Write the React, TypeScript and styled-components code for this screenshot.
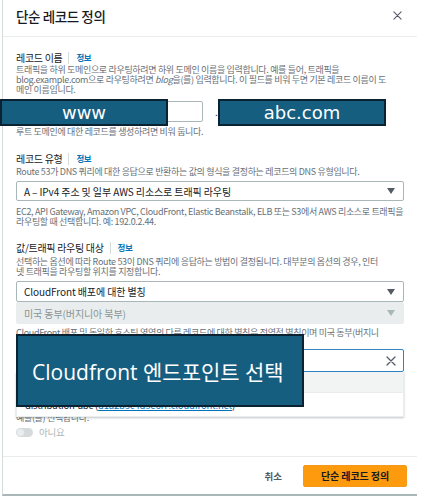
import React from 'react';
import styled, { createGlobalStyle } from 'styled-components';

const GlobalStyle = createGlobalStyle`
  html, body { margin: 0; padding: 0; background: #ffffff; }
  body { font-family: "Noto Sans CJK KR", "Noto Sans", sans-serif; color: #16191f; }
  * { box-sizing: border-box; }
`;

const Page = styled.div`
  position: relative;
  width: 424px;
  height: 496px;
  overflow: hidden;
`;

const Modal = styled.div`
  margin-left: 2px;
  width: 415px;
  height: 496px;
  border-left: 1px solid #d5dbdb;
  border-bottom: 2px solid #aab7b8;
  display: flex;
  flex-direction: column;
  background: #ffffff;
`;

const Header = styled.div`
  height: 37px;
  flex: none;
  border-bottom: 1px solid #eaeded;
  display: flex;
  align-items: center;
  justify-content: space-between;
  padding: 0 15px 5px 13px;
`;

const Title = styled.h1`
  margin: 0;
  font-size: 13.5px;
  font-weight: 500;
  letter-spacing: -0.4px;
  line-height: 16px;
  color: #16191f;
`;

const CloseButton = styled.button`
  border: none;
  background: none;
  padding: 0;
  width: 10px;
  height: 10px;
  display: flex;
  align-items: center;
  justify-content: center;
  color: #545b64;
`;

const Body = styled.div`
  flex: 1;
  position: relative;
  padding: 14px 10px 0 13px;
  display: flex;
  flex-direction: column;
`;

const Field = styled.div<{ $gap?: number }>`
  display: flex;
  flex-direction: column;
  margin-top: ${p => p.$gap ?? 0}px;
`;

const LabelRow = styled.div`
  display: flex;
  align-items: center;
  height: 13px;
`;

const Label = styled.span`
  font-size: 10px;
  letter-spacing: -0.3px;
  line-height: 13px;
  color: #16191f;
`;

const Sep = styled.span`
  width: 1px;
  height: 12px;
  background: #d5dbdb;
  margin: 0 7px 0 6px;
`;

const Info = styled.span`
  font-size: 8.5px;
  font-weight: 700;
  letter-spacing: -0.4px;
  color: #0073bb;
  line-height: 13px;
`;

const Desc = styled.div<{ $mt?: number }>`
  margin-top: ${p => p.$mt ?? 1}px;
  font-size: 9px;
  line-height: 10px;
  letter-spacing: -0.33px;
  color: #687078;
  white-space: nowrap;
  em { font-style: italic; }
`;

const NameRow = styled.div`
  margin-top: 6px;
  display: flex;
  align-items: center;
  height: 21px;
`;

const TextInput = styled.div<{ $w: number }>`
  width: ${p => p.$w}px;
  height: 21px;
  border: 1px solid #aab7b8;
  border-radius: 2px;
  background: #fff;
`;

const DomainText = styled.span`
  margin-left: 12px;
  font-size: 10px;
  color: #16191f;
`;

const Select = styled.div<{ $disabled?: boolean; $h: number; $mt?: number }>`
  margin-top: ${p => p.$mt ?? 0}px;
  height: ${p => p.$h}px;
  width: 388px;
  border: 1px solid ${p => (p.$disabled ? '#eaeded' : '#aab7b8')};
  background: ${p => (p.$disabled ? '#eaeded' : '#ffffff')};
  border-radius: 2px;
  display: flex;
  align-items: center;
  justify-content: space-between;
  padding: 0 8px 0 7px;
  font-size: 10px;
  letter-spacing: -0.1px;
  color: ${p => (p.$disabled ? '#879596' : '#16191f')};
`;

const Caret = styled.span<{ $disabled?: boolean }>`
  width: 0;
  height: 0;
  border-left: 4px solid transparent;
  border-right: 4px solid transparent;
  border-top: 6px solid ${p => (p.$disabled ? '#aab7b8' : '#545b64')};
`;

const SearchWrap = styled.div`
  position: relative;
  margin-top: 1px;
`;

const SearchInput = styled.div`
  height: 23px;
  width: 388px;
  border: 1px solid #3184c6;
  border-radius: 2px;
  display: flex;
  align-items: center;
  justify-content: flex-end;
  padding-right: 7px;
  color: #545b64;
`;

const Menu = styled.div`
  position: absolute;
  top: 23px;
  left: 0;
  width: 388px;
  background: #fff;
  border: 1px solid #eaeded;
  border-top: none;
  box-shadow: 0 1px 2px rgba(0, 28, 36, 0.25);
  z-index: 2;
`;

const MenuGroup = styled.div`
  height: 21px;
  background: #f2f3f3;
  border-bottom: 1px solid #eaeded;
  font-size: 9px;
  color: #545b64;
  padding-left: 8px;
  display: flex;
  align-items: center;
`;

const MenuItem = styled.div`
  height: 23px;
  padding-left: 8px;
  display: flex;
  align-items: center;
  font-size: 9.5px;
  color: #16191f;
  letter-spacing: -0.2px;
  span { color: #0073bb; text-decoration: underline; }
`;

const ToggleRow = styled.div`
  margin-top: 3px;
  display: flex;
  align-items: center;
  gap: 6px;
  height: 12px;
`;

const Toggle = styled.span`
  width: 17px;
  height: 9px;
  border-radius: 5px;
  background: #d5dbdb;
  position: relative;
  &::after {
    content: '';
    position: absolute;
    left: 1px;
    top: 1px;
    width: 7px;
    height: 7px;
    border-radius: 50%;
    background: #eaeded;
  }
`;

const ToggleText = styled.span`
  font-size: 9.5px;
  color: #aab7b8;
  letter-spacing: -0.2px;
`;

const Footer = styled.div`
  height: 38px;
  flex: none;
  border-top: 1px solid #eaeded;
  display: flex;
  align-items: center;
  justify-content: flex-end;
  padding-right: 10px;
`;

const LinkButton = styled.button`
  border: none;
  background: none;
  padding: 0;
  margin-right: 21px;
  font-family: inherit;
  font-size: 9.5px;
  font-weight: 700;
  color: #545b64;
`;

const PrimaryButton = styled.button`
  width: 104px;
  height: 22px;
  border: 1px solid #f69a1e;
  border-radius: 2px;
  background: #fd9a0e;
  font-family: inherit;
  font-size: 10px;
  font-weight: 700;
  letter-spacing: -0.1px;
  color: #16191f;
  padding: 0;
`;

const Annotation = styled.div<{ $x: number; $y: number; $w: number; $h: number; $size: number; $align?: string; $pl?: number; $font?: string }>`
  position: absolute;
  left: ${p => p.$x}px;
  top: ${p => p.$y}px;
  width: ${p => p.$w}px;
  height: ${p => p.$h}px;
  background: #165e80;
  border: 2px solid #0b2233;
  display: flex;
  align-items: center;
  justify-content: ${p => p.$align ?? 'center'};
  padding-left: ${p => p.$pl ?? 0}px;
  color: #ffffff;
  font-family: ${p => p.$font ?? '"DejaVu Sans", sans-serif'};
  font-size: ${p => p.$size}px;
  z-index: 5;
`;

const XIcon = ({ size, sw }: { size: number; sw: number }) => (
  <svg width={size} height={size} viewBox="0 0 10 10" fill="none" stroke="currentColor" strokeWidth={sw} strokeLinecap="round">
    <path d="M1 1 L9 9 M9 1 L1 9" />
  </svg>
);

export default function App() {
  return (
    <Page>
      <GlobalStyle />
      <Modal>
        <Header>
          <Title>단순 레코드 정의</Title>
          <CloseButton aria-label="닫기">
            <XIcon size={9} sw={1.2} />
          </CloseButton>
        </Header>
        <Body>
          <Field>
            <LabelRow>
              <Label>레코드 이름</Label>
              <Sep />
              <Info>정보</Info>
            </LabelRow>
            <Desc>
              트래픽을 하위 도메인으로 라우팅하려면 하위 도메인 이름을 입력합니다. 예를 들어, 트래픽을
              <br />
              blog.example.com으로 라우팅하려면 <em>blog</em>을(를) 입력합니다. 이 필드를 비워 두면 기본 레코드 이름이 도
              <br />
              메인 이름입니다.
            </Desc>
            <NameRow>
              <TextInput $w={187} />
              <DomainText>.abc.com</DomainText>
            </NameRow>
            <Desc $mt={5}>루트 도메인에 대한 레코드를 생성하려면 비워 둡니다.</Desc>
          </Field>

          <Field $gap={15}>
            <LabelRow>
              <Label>레코드 유형</Label>
              <Sep />
              <Info>정보</Info>
            </LabelRow>
            <Desc $mt={2}>Route 53가 DNS 쿼리에 대한 응답으로 반환하는 값의 형식을 결정하는 레코드의 DNS 유형입니다.</Desc>
            <Select $h={20} $mt={4}>
              <span>A – IPv4 주소 및 일부 AWS 리소스로 트래픽 라우팅</span>
              <Caret />
            </Select>
            <Desc $mt={6}>
              EC2, API Gateway, Amazon VPC, CloudFront, Elastic Beanstalk, ELB 또는 S3에서 AWS 리소스로 트래픽을
              <br />
              라우팅할 때 선택합니다. 예: 192.0.2.44.
            </Desc>
          </Field>

          <Field $gap={14}>
            <LabelRow>
              <Label>값/트래픽 라우팅 대상</Label>
              <Sep />
              <Info>정보</Info>
            </LabelRow>
            <Desc $mt={3}>
              선택하는 옵션에 따라 Route 53이 DNS 쿼리에 응답하는 방법이 결정됩니다. 대부분의 옵션의 경우, 인터
              <br />
              넷 트래픽을 라우팅할 위치를 지정합니다.
            </Desc>
            <Select $h={21} $mt={4}>
              <span>CloudFront 배포에 대한 별칭</span>
              <Caret />
            </Select>
            <Select $h={22} $disabled>
              <span>미국 동부(버지니아 북부)</span>
              <Caret $disabled />
            </Select>
            <Desc $mt={4}>
              CloudFront 배포 및 동일한 호스팅 영역의 다른 레코드에 대한 별칭은 전역적 별칭이며 미국 동부(버지니
              <br />
              아) 리전에서만 사용할 수 있습니다.
            </Desc>
            <SearchWrap>
              <SearchInput>
                <XIcon size={10} sw={1.3} />
              </SearchInput>
              <Menu>
                <MenuGroup>CloudFront 배포</MenuGroup>
                <MenuItem>
                  distribution-abc&nbsp;(<span>d1a2b3c4d5e6f7.cloudfront.net</span>)
                </MenuItem>
              </Menu>
            </SearchWrap>
          </Field>

          <Field $gap={16}>
            <LabelRow>
              <Label>대상 상태 평가</Label>
            </LabelRow>
            <Desc $mt={2}>
              이 레코드의 대상 리소스 상태를 Route 53에서 평가하도록 하려면
              <br />
              예을(를) 선택합니다.
            </Desc>
            <ToggleRow>
              <Toggle />
              <ToggleText>아니요</ToggleText>
            </ToggleRow>
          </Field>
        </Body>
        <Footer>
          <LinkButton>취소</LinkButton>
          <PrimaryButton>단순 레코드 정의</PrimaryButton>
        </Footer>
      </Modal>

      <Annotation $x={0} $y={99} $w={168} $h={27} $size={18}>www</Annotation>
      <Annotation $x={218} $y={99} $w={168} $h={27} $size={18}>abc.com</Annotation>
      <Annotation
        $x={16}
        $y={334}
        $w={288}
        $h={73}
        $size={21}
        $align="flex-start"
        $pl={14}
        $font={'"Open Sans", "Noto Sans CJK KR", sans-serif'}
      >
        Cloudfront 엔드포인트 선택
      </Annotation>
    </Page>
  );
}
